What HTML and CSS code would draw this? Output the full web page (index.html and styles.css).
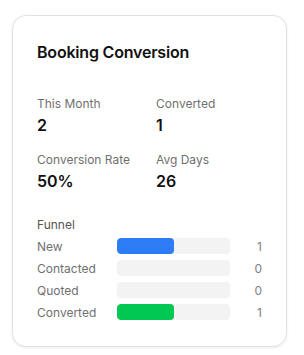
FILE: index.html
```html
<!DOCTYPE html>
<html lang="en">
<head>
    <meta charset="UTF-8">
    <meta name="viewport" content="width=device-width, initial-scale=1.0">
    <title>Booking Conversion</title>
    <link rel="stylesheet" href="styles.css">
</head>
<body>

    <div class="card">
        <h2 class="card-title">Booking Conversion</h2>

        <div class="stats">
            <div class="stat">
                <span class="stat-label">This Month</span>
                <span class="stat-value">2</span>
            </div>
            <div class="stat">
                <span class="stat-label">Converted</span>
                <span class="stat-value">1</span>
            </div>
            <div class="stat">
                <span class="stat-label">Conversion Rate</span>
                <span class="stat-value">50%</span>
            </div>
            <div class="stat">
                <span class="stat-label">Avg Days</span>
                <span class="stat-value">26</span>
            </div>
        </div>

        <div class="funnel">
            <div class="funnel-title">Funnel</div>

            <div class="funnel-row">
                <span class="funnel-label">New</span>
                <div class="bar"><div class="bar-fill blue" style="width: 50%"></div></div>
                <span class="funnel-count">1</span>
            </div>
            <div class="funnel-row">
                <span class="funnel-label">Contacted</span>
                <div class="bar"></div>
                <span class="funnel-count">0</span>
            </div>
            <div class="funnel-row">
                <span class="funnel-label">Quoted</span>
                <div class="bar"></div>
                <span class="funnel-count">0</span>
            </div>
            <div class="funnel-row">
                <span class="funnel-label">Converted</span>
                <div class="bar"><div class="bar-fill green" style="width: 50%"></div></div>
                <span class="funnel-count">1</span>
            </div>
        </div>
    </div>

</body>
</html>
```

FILE: styles.css
```css
*{
    box-sizing: border-box;
}

body{
    margin: 0;
    padding: 15px 17px 11px 12px;
    background: #ffffff;
    font-family: Inter, "Noto Sans", sans-serif;
    color: #111111;
}

.card{
    border: 1px solid #e2e2e2;
    border-radius: 14px;
    box-shadow: 0 1px 3px rgba(0, 0, 0, 0.08);
    padding: 26px 24px 23px 24px;
    background: #ffffff;
}

.card-title{
    margin: 0;
    font-size: 16px;
    line-height: 20px;
    font-weight: 600;
    letter-spacing: -0.2px;
}

.stats{
    display: grid;
    grid-template-columns: 119px 1fr;
    row-gap: 17px;
    margin-top: 34px;
}

.stat{
    display: flex;
    flex-direction: column;
    gap: 3px;
}

.stat-label{
    font-size: 12px;
    line-height: 16px;
    color: #707070;
}

.stat-value{
    font-size: 16px;
    line-height: 20px;
    font-weight: 600;
}

.funnel{
    margin-top: 26px;
}

.funnel-title{
    font-size: 12px;
    line-height: 16px;
    color: #555555;
    margin-bottom: 2px;
}

.funnel-row{
    display: flex;
    align-items: center;
    height: 22px;
    font-size: 12px;
    color: #707070;
}

.funnel-label{
    width: 80px;
}

.bar{
    flex: 1;
    height: 16px;
    border-radius: 4px;
    background: #f3f3f3;
    overflow: hidden;
}

.bar-fill{
    height: 100%;
    border-radius: 4px;
}

.blue{
    background: #2d7cf6;
}

.green{
    background: #00c853;
}

.funnel-count{
    width: 32px;
    text-align: right;
    color: #808080;
}
```
